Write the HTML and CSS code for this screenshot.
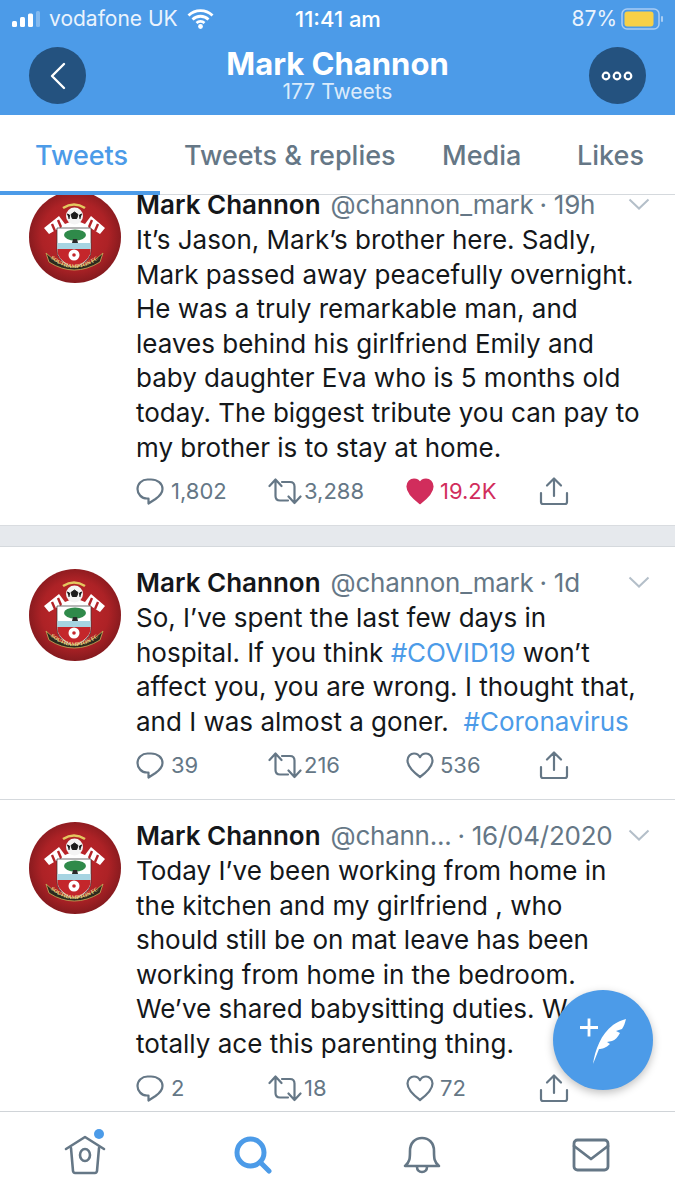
FILE: index.html
```html
<!DOCTYPE html>
<html lang="en">
<head>
<meta charset="utf-8">
<title>Mark Channon</title>
<link rel="stylesheet" href="styles.css">
</head>
<body>
<svg class="defs" width="0" height="0" aria-hidden="true">
  <defs>
    <radialGradient id="red" cx="50%" cy="48%" r="52%">
      <stop offset="0" stop-color="#c4282c"/>
      <stop offset="0.7" stop-color="#ad2226"/>
      <stop offset="1" stop-color="#851a1e"/>
    </radialGradient>
    <path id="arc" d="M20 66 Q45 88 72 66"/>
    <symbol id="crest" viewBox="0 0 92 92">
      <circle cx="46" cy="46" r="46" fill="url(#red)"/>
      <path d="M34 17 Q45 10 56 17" fill="none" stroke="#e4c860" stroke-width="2.600"/>
      <path d="M15 37 L30 25 L36 33 L46 29 L56 33 L62 25 L76 37 L71 43 L60 36 L58 40 H34 L32 36 L20 43 Z" fill="#fff"/>
      <path d="M23 33 l3 7 M29 29 l3 7 M63 29 l-3 7 M69 33 l-3 7" stroke="#b32226" stroke-width="2.400"/>
      <circle cx="45.500" cy="25" r="8.500" fill="#f4f4f4"/>
      <path d="M45.500 21 l3.500 2.500 -1.300 4 h-4.400 L42 23.500 Z M38 23 l2.500 1 -.5 4 M53 23 l-2.500 1 .5 4" fill="#1c1c1c" stroke="#1c1c1c"/>
      <path d="M28 37 H62 V60 Q62 70 45 78 Q28 70 28 60 Z" fill="#fff" stroke="#333" stroke-width="0.700"/>
      <path d="M28.500 52 H61.500 V58 H28.500 Z" fill="#a6d4e2"/>
      <path d="M28.500 58 H61.500 V61 Q61 69 45 77 Q29 69 28.500 61 Z" fill="#c4262b"/>
      <ellipse cx="46" cy="44" rx="11" ry="5.500" fill="#2f8a4a"/>
      <path d="M44 48 H48 L49 52 H43 Z" fill="#2a2a2a"/>
      <circle cx="45" cy="64" r="5.500" fill="#fff"/>
      <circle cx="45" cy="64" r="1.800" fill="#c4262b"/>
      <path d="M17 62 Q45 90 74 62 L71 71 Q45 87 20 71 Z" fill="#2a2a1e" stroke="#c8b05a" stroke-width="0.800"/>
      <text class="crest-text"><textPath href="#arc" startOffset="2">SOUTHAMPTON FC</textPath></text>
    </symbol>
    <symbol id="i-reply" viewBox="0 0 28 28">
      <path d="M11.500 2.500 H15 C21.500 2.500 26.500 6.500 26.500 12 C26.500 16.500 23 19.500 19.500 22 L12.500 26.500 V21.500 H11 C5.500 21.500 1.500 17 1.500 12 C1.500 6.500 6 2.500 11.500 2.500 Z" fill="none" stroke="currentColor" stroke-width="2.200" stroke-linejoin="round"/>
    </symbol>
    <symbol id="i-rt" viewBox="0 0 34 28">
      <path d="M1.500 9 L7.500 2.500 L13.500 9 M7.500 3 V19 Q7.500 23.500 12 23.500 H20 M14 5 H22 Q26.500 5 26.500 9.500 V25.500 M20.500 19.500 L26.500 26 L32.500 19.500" fill="none" stroke="currentColor" stroke-width="2.200" stroke-linecap="round" stroke-linejoin="round"/>
    </symbol>
    <symbol id="i-heart" viewBox="0 0 28 28">
      <path d="M14 26 C8 21.500 1.500 16 1.500 9.500 C1.500 5.500 4.500 2.500 8 2.500 C10.500 2.500 12.800 3.800 14 6.200 C15.200 3.800 17.500 2.500 20 2.500 C23.500 2.500 26.500 5.500 26.500 9.500 C26.500 16 20 21.500 14 26 Z" stroke-width="2.200" stroke-linejoin="round"/>
    </symbol>
    <symbol id="i-share" viewBox="0 0 30 30">
      <path d="M15 20 V3 M8 9.500 L15 2.500 L22 9.500 M2 17 V26 Q2 28 4 28 H26 Q28 28 28 26 V17" fill="none" stroke="currentColor" stroke-width="2.200" stroke-linecap="round" stroke-linejoin="round"/>
    </symbol>
  </defs>
</svg>

<div class="phone">
  <header class="topbar">
    <div class="status">
      <div class="status-left">
        <svg class="signal" width="28" height="16" viewBox="0 0 28 16"><rect x="0" y="10" width="5" height="6" rx="1.500" fill="#fff"/><rect x="8" y="6" width="5" height="10" rx="1.500" fill="#fff"/><rect x="16" y="2.500" width="5" height="13.500" rx="1.500" fill="#fff"/><rect x="24" y="0" width="4" height="16" rx="1.500" fill="#fff" opacity=".3"/></svg>
        <span>vodafone UK</span>
        <svg class="wifi" width="27" height="20" viewBox="0 0 27 20"><path d="M1.500 6.500 A17 17 0 0 1 25.500 6.500 M5.500 10.500 A11.500 11.500 0 0 1 21.500 10.500 M9.500 14 A6 6 0 0 1 17.500 14" fill="none" stroke="#fff" stroke-width="2.800"/><circle cx="13.500" cy="17.500" r="2.400" fill="#fff"/></svg>
      </div>
      <div class="clock">11:41 am</div>
      <div class="status-right">
        <span>87%</span>
        <svg class="battery" width="43" height="22" viewBox="0 0 43 22"><rect x="1" y="1" width="37" height="20" rx="5" fill="none" stroke="#a9cdf3" stroke-width="1.500"/><rect x="3.500" y="3.500" width="29" height="15" rx="3" fill="#f7d047"/><rect x="40" y="8" width="2" height="6" rx="1" fill="#a9cdf3"/></svg>
      </div>
    </div>
    <div class="nav">
      <button class="round-btn" aria-label="Back">
        <svg width="18" height="28" viewBox="0 0 18 28"><path d="M15 2 L3 14 L15 26" fill="none" stroke="#fff" stroke-width="2.400" stroke-linecap="round" stroke-linejoin="round"/></svg>
      </button>
      <div class="title">
        <div class="title-name">Mark Channon</div>
        <div class="title-sub">177 Tweets</div>
      </div>
      <button class="round-btn" aria-label="More">
        <svg width="32" height="10" viewBox="0 0 32 10"><g fill="none" stroke="#fff" stroke-width="2.200"><circle cx="5" cy="5" r="3.300"/><circle cx="16" cy="5" r="3.300"/><circle cx="27" cy="5" r="3.300"/></g></svg>
      </button>
    </div>
  </header>

  <nav class="tabs">
    <div class="tab tab-active">Tweets</div>
    <div class="tab">Tweets &amp; replies</div>
    <div class="tab">Media</div>
    <div class="tab">Likes</div>
  </nav>

  <main class="feed">
    <article class="tweet tweet-first">
      <svg class="avatar"><use href="#crest"/></svg>
      <div class="body">
        <div class="head"><b class="name">Mark Channon</b><span class="handle">@channon_mark</span><span class="when">· 19h</span><svg class="chev" width="22" height="12" viewBox="0 0 22 12"><path d="M1.500 1.500 L11 10.500 L20.500 1.500" fill="none" stroke="#b4bfc9" stroke-width="2"/></svg></div>
        <p class="text">It’s Jason, Mark’s brother here. Sadly, Mark passed away peacefully overnight. He was a truly remarkable man, and leaves behind his girlfriend Emily and baby daughter Eva who is 5 months old today. The biggest tribute you can pay to my brother is to stay at home.</p>
        <div class="actions">
          <div class="act"><svg class="ic-reply"><use href="#i-reply"/></svg>1,802</div>
          <div class="act"><svg class="ic-rt"><use href="#i-rt"/></svg>3,288</div>
          <div class="act act-liked"><svg class="ic-heart heart-on"><use href="#i-heart"/></svg>19.2K</div>
          <div class="act"><svg class="ic-share"><use href="#i-share"/></svg></div>
        </div>
      </div>
    </article>
    <div class="spacer"></div>
    <article class="tweet">
      <svg class="avatar"><use href="#crest"/></svg>
      <div class="body">
        <div class="head"><b class="name">Mark Channon</b><span class="handle">@channon_mark</span><span class="when">· 1d</span><svg class="chev" width="22" height="12" viewBox="0 0 22 12"><path d="M1.500 1.500 L11 10.500 L20.500 1.500" fill="none" stroke="#b4bfc9" stroke-width="2"/></svg></div>
        <p class="text">So, I’ve spent the last few days in hospital. If you think <a class="tag">#COVID19</a> won’t affect you, you are wrong. I thought that, and I was almost a goner. &nbsp;<a class="tag">#Coronavirus</a></p>
        <div class="actions">
          <div class="act"><svg class="ic-reply"><use href="#i-reply"/></svg>39</div>
          <div class="act"><svg class="ic-rt"><use href="#i-rt"/></svg>216</div>
          <div class="act"><svg class="ic-heart"><use href="#i-heart"/></svg>536</div>
          <div class="act"><svg class="ic-share"><use href="#i-share"/></svg></div>
        </div>
      </div>
    </article>
    <article class="tweet tweet-last">
      <svg class="avatar"><use href="#crest"/></svg>
      <div class="body">
        <div class="head"><b class="name">Mark Channon</b><span class="handle">@chann...</span><span class="when">· 16/04/2020</span><svg class="chev" width="22" height="12" viewBox="0 0 22 12"><path d="M1.500 1.500 L11 10.500 L20.500 1.500" fill="none" stroke="#b4bfc9" stroke-width="2"/></svg></div>
        <p class="text">Today I’ve been working from home in the kitchen and my girlfriend , who should still be on mat leave has been working from home in the bedroom. We’ve shared babysitting duties. We totally ace this parenting thing.</p>
        <div class="actions">
          <div class="act"><svg class="ic-reply"><use href="#i-reply"/></svg>2</div>
          <div class="act"><svg class="ic-rt"><use href="#i-rt"/></svg>18</div>
          <div class="act"><svg class="ic-heart"><use href="#i-heart"/></svg>72</div>
          <div class="act"><svg class="ic-share"><use href="#i-share"/></svg></div>
        </div>
      </div>
    </article>
    <button class="fab" aria-label="New tweet">
      <svg width="48" height="52" viewBox="0 0 48 52">
        <path d="M1 13.500 H19 M10 4.500 V22.500" stroke="#fff" stroke-width="2.800"/>
        <path d="M14 50 C16 36 22 20 34 11 C38 8 43 6 47 5 C46 9 45 12 43 15 L37 17 L41 19 C39 23 36 26 33 27 L28 28 L31 30 C27 34 23 35 20 35 C18 40 16 45 14 50 Z" fill="#fff"/>
      </svg>
    </button>
  </main>

  <footer class="tabbar">
    <svg class="ic-home" width="44" height="52" viewBox="-3 0 44 52"><g fill="none" stroke="#657786" stroke-width="2.600" stroke-linejoin="round" stroke-linecap="round"><path d="M1 20 L20 8 L39 20"/><path d="M6 19 L8 42 Q8.500 44 10 44 H30 Q31.500 44 32 42 L34 19"/><ellipse cx="20" cy="26" rx="5" ry="6"/></g><circle cx="34" cy="5" r="5" fill="#4c9be8"/></svg>
    <svg width="38" height="38" viewBox="0 0 38 38"><circle cx="16.500" cy="16.500" r="13.500" fill="none" stroke="#4c9be8" stroke-width="5"/><path d="M26 26 L35 35" stroke="#4c9be8" stroke-width="5" stroke-linecap="round"/></svg>
    <svg width="38" height="38" viewBox="0 0 38 38"><g fill="none" stroke="#657786" stroke-width="2.600" stroke-linejoin="round" stroke-linecap="round"><path d="M2 30 H36 C31 26 31 22 31 15 C31 7 26 2 19 2 C12 2 7 7 7 15 C7 22 7 26 2 30 Z"/><path d="M14 31 C14 34 16 36 19 36 C22 36 24 34 24 31"/></g></svg>
    <svg width="38" height="34" viewBox="0 0 38 34"><g fill="none" stroke="#657786" stroke-width="2.800" stroke-linejoin="round" stroke-linecap="round"><rect x="2" y="2" width="34" height="30" rx="3.500"/><path d="M2 8 L19 21 L36 8"/></g></svg>
  </footer>
</div>
</body>
</html>
```
FILE: styles.css
```css
* { box-sizing: border-box; }
html, body { margin: 0; padding: 0; background: #fff; }
body { font-family: Inter, "Liberation Sans", sans-serif; color: #14171a; }
.defs { display: block; height: 0; }
.phone { width: 675px; height: 1200px; display: flex; flex-direction: column; overflow: hidden; }

.topbar { height: 115px; flex: none; background: #4c9be8; color: #fff; }
.status { height: 37px; display: grid; grid-template-columns: 1fr auto 1fr; align-items: center; padding: 0 11px 0 12px; font-size: 21px; }
.status-left { display: flex; align-items: center; gap: 9px; color: #eaf3fd; }
.status-right { display: flex; align-items: center; justify-content: flex-end; gap: 4px; color: #eaf3fd; }
.clock { font-weight: 500; font-size: 22px; }
.nav { display: flex; align-items: flex-start; justify-content: space-between; padding: 10px 29px 0; }
.round-btn { width: 57px; height: 57px; border: 0; border-radius: 50%; background: #24527f; padding: 0; display: flex; align-items: center; justify-content: center; }
.title { text-align: center; }
.title-name { font-size: 31px; font-weight: 700; line-height: 36px; margin-top: -1px; }
.title-sub { font-size: 21px; line-height: 24px; margin-top: -2px; color: #dcebfb; }

.tabs { height: 80px; flex: none; display: grid; grid-template-columns: 149px 258px 135px auto; align-items: center; padding: 2px 0 0 35px; position: relative; border-bottom: 1px solid #d5d9dd; font-size: 27px; font-weight: 500; color: #657786; }
.tab-active { color: #4c9be8; }
.tab-active::after { content: ""; position: absolute; left: 0; bottom: -1px; width: 160px; height: 4px; background: #4c9be8; }

.feed { flex: 1; overflow: hidden; position: relative; }
.tweet { display: grid; grid-template-columns: 92px 1fr; column-gap: 16px; padding: 22px 25px 0 29px; height: 253px; border-bottom: 1px solid #d5d9dd; }
.tweet-first { margin-top: -26px; height: 356px; border-bottom: 0; }
.tweet-last { height: 320px; border-bottom: 0; }
.spacer { height: 22px; background: #e6e9ed; border-top: 1px solid #d9dce0; border-bottom: 1px solid #d5d9dd; }
.avatar { width: 92px; height: 92px; display: block; }
.crest-text { font-family: "Liberation Serif", serif; font-weight: 700; font-size: 5.500px; fill: #e8d98a; }

.body { min-width: 0; margin-left: -1px; }
.head { display: flex; align-items: center; height: 26px; font-size: 26px; white-space: nowrap; }
.name { font-weight: 600; }
.handle { color: #657786; margin-left: 10px; letter-spacing: -.25px; }
.when { color: #657786; margin-left: 6px; letter-spacing: -.25px; }
.chev { margin-left: auto; }
.text { margin: 6px 0 0; font-size: 26px; line-height: 34.600px; color: #14171a; }
.tag { color: #4c9be8; }

.actions { display: grid; grid-template-columns: 132px 138px 133px 1fr; margin-top: 10px; height: 32px; font-size: 22px; color: #657786; }
.act { display: flex; align-items: center; }
.act-liked { color: #d12d5c; }
.ic-reply { width: 28px; height: 28px; margin-right: 7px; }
.ic-rt { width: 34px; height: 28px; margin-right: 2px; }
.ic-heart { width: 28px; height: 28px; margin-right: 6px; fill: none; stroke: currentColor; }
.heart-on { fill: #d12d5c; stroke: #d12d5c; }
.ic-share { width: 30px; height: 30px; }

.fab { position: absolute; left: 553px; top: 795px; width: 100px; height: 100px; border: 0; padding: 0; border-radius: 50%; background: #4c9be8; box-shadow: 0 3px 8px rgba(0,0,0,.25); display: flex; align-items: center; justify-content: center; }

.tabbar { height: 89px; flex: none; background: #fff; border-top: 1px solid #d0d4d8; display: grid; grid-template-columns: repeat(4, 1fr); align-items: center; justify-items: center; padding: 0 0 3px; }
```
